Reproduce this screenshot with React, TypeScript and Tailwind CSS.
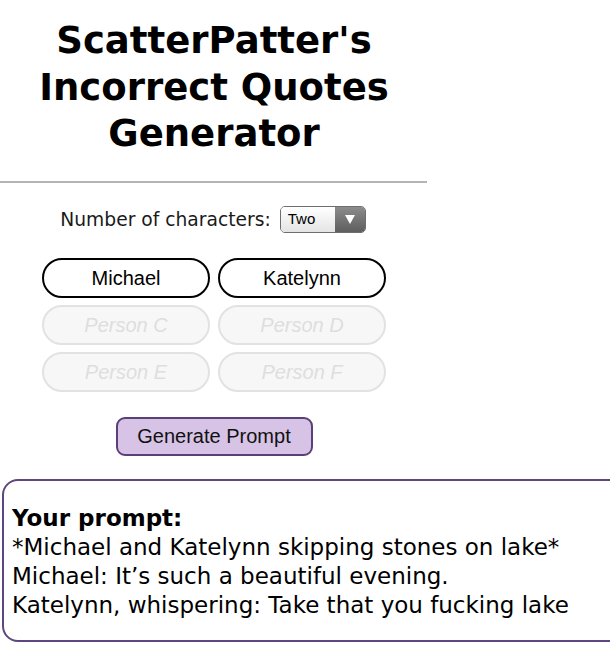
import React from "react";

const verdana = { fontFamily: '"DejaVu Sans", Verdana, sans-serif' };
const arial = { fontFamily: '"Liberation Sans", Arial, sans-serif' };

function NameInput({ value, placeholder, enabled }: { value?: string; placeholder: string; enabled: boolean }) {
  return enabled ? (
    <div
      className="flex h-[40px] w-[168px] items-center justify-center rounded-full border-2 border-black bg-white text-[20px] text-black"
      style={arial}
    >
      {value}
    </div>
  ) : (
    <div
      className="flex h-[40px] w-[168px] items-center justify-center rounded-full border-2 border-[#e2e2e2] bg-[#f7f7f7] text-[20px] italic text-[#dedede]"
      style={arial}
    >
      {placeholder}
    </div>
  );
}

export default function App() {
  const slots = [
    { value: "Michael", placeholder: "Person A", enabled: true },
    { value: "Katelynn", placeholder: "Person B", enabled: true },
    { placeholder: "Person C", enabled: false },
    { placeholder: "Person D", enabled: false },
    { placeholder: "Person E", enabled: false },
    { placeholder: "Person F", enabled: false },
  ];

  return (
    <div className="h-[671px] w-[610px] overflow-hidden bg-white">
      <div className="w-[428px]">
        <h1 className="pt-[18px] text-center text-[37px] font-bold leading-[46.5px] text-black" style={verdana}>
          ScatterPatter's
          <br />
          Incorrect Quotes
          <br />
          Generator
        </h1>
        <div className="mt-[23px] h-[2px] w-[427px] bg-[#b4b4b4]" />

        <div className="mt-[23px] flex items-center justify-center gap-[9px] pr-[2px]">
          <span className="text-[18.7px] text-[#1a1a1a]" style={verdana}>
            Number of characters:
          </span>
          <div className="flex h-[27px] w-[86px] overflow-hidden rounded-[5px] border border-[#6e6e6e]">
            <div
              className="flex flex-1 items-center bg-gradient-to-b from-white to-[#e4e4e4] pl-[7px] text-[15px] text-black"
              style={arial}
            >
              Two
            </div>
            <div className="flex w-[30px] items-center justify-center bg-gradient-to-b from-[#8c8c8c] to-[#5e5e5e]">
              <svg width="10" height="9" viewBox="0 0 10 9">
                <path d="M0 0h10L5 9z" fill="#fff" />
              </svg>
            </div>
          </div>
        </div>

        <div className="mt-[24px] ml-[42px] grid w-[344px] grid-cols-2 gap-x-[8px] gap-y-[7px]">
          {slots.map((s) => (
            <NameInput key={s.placeholder} value={s.value} placeholder={s.placeholder} enabled={s.enabled} />
          ))}
        </div>

        <div className="mt-[25px] flex justify-center">
          <button
            className="h-[39px] w-[197px] rounded-[9px] border-2 border-[#5a3f78] bg-[#d7c3e6] text-[20px] text-[#111]"
            style={arial}
          >
            Generate Prompt
          </button>
        </div>
      </div>

      <div
        className="mt-[23px] ml-[2px] w-[640px] rounded-[16px] border-2 border-[#5e4780] px-[8px] pt-[23px] pb-[20px] text-[23px] leading-[29px] text-black"
        style={verdana}
      >
        <div className="font-bold">Your prompt:</div>
        <div>*Michael and Katelynn skipping stones on lake*</div>
        <div>Michael: It’s such a beautiful evening.</div>
        <div>Katelynn, whispering: Take that you fucking lake</div>
      </div>
    </div>
  );
}
